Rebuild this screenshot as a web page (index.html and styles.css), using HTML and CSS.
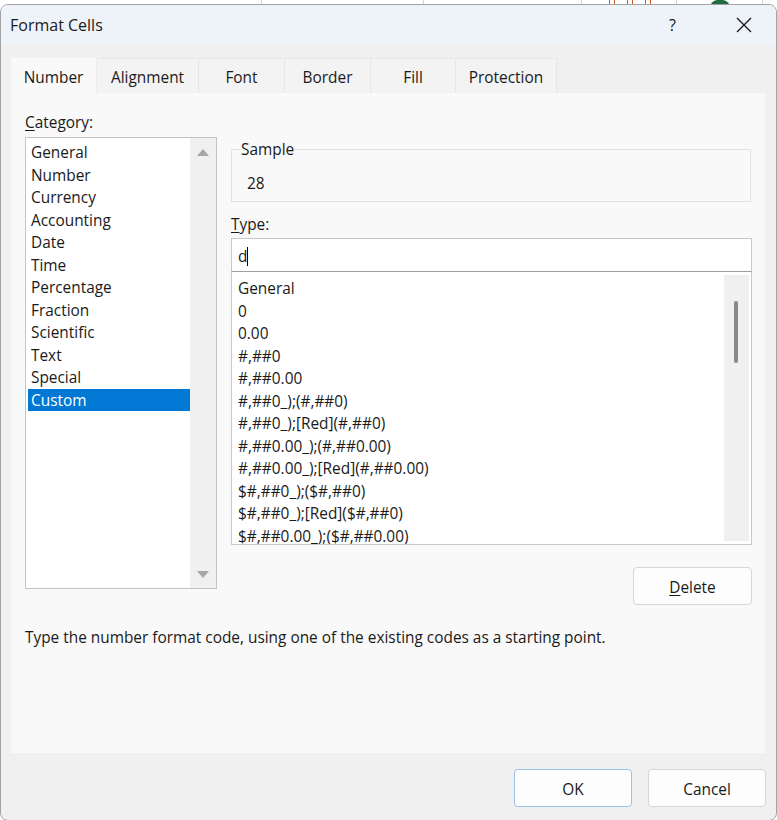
FILE: index.html
```html
<!DOCTYPE html>
<html lang="en">
<head>
<meta charset="utf-8">
<title>Format Cells</title>
<link rel="stylesheet" href="styles.css">
</head>
<body>
<div class="screen">
  <div class="backdrop">
    <div class="cell c1"></div>
    <div class="cell c2"></div>
    <div class="cell c3"></div>
    <div class="cell c4"><span class="mark"></span><span class="mark"></span><span class="mark"></span></div>
    <div class="cell c5"><span class="hill"></span></div>
    <div class="cell c6"></div>
  </div>

  <div class="dialog">
    <div class="titlebar">
      <span class="title">Format Cells</span>
      <span class="help">?</span>
      <span class="close">
        <svg width="16" height="16" viewBox="0 0 16 16"><path d="M1 1 L15 15 M15 1 L1 15" stroke="#1b1b1b" stroke-width="1.4" fill="none"/></svg>
      </span>
    </div>

    <div class="body">
      <div class="tabs">
        <div class="tab active w86">Number</div>
        <div class="tab w102">Alignment</div>
        <div class="tab w86">Font</div>
        <div class="tab w86">Border</div>
        <div class="tab w85">Fill</div>
        <div class="tab w101">Protection</div>
      </div>

      <div class="panel">
        <div class="columns">
          <div class="leftcol">
            <div class="label"><u>C</u>ategory:</div>
            <div class="catlist">
              <div class="items">
                <div class="item">General</div>
                <div class="item">Number</div>
                <div class="item">Currency</div>
                <div class="item">Accounting</div>
                <div class="item">Date</div>
                <div class="item">Time</div>
                <div class="item">Percentage</div>
                <div class="item">Fraction</div>
                <div class="item">Scientific</div>
                <div class="item">Text</div>
                <div class="item">Special</div>
                <div class="item selected">Custom</div>
              </div>
              <div class="cat-scroll">
                <span class="arrow up"></span>
                <span class="arrow down"></span>
              </div>
            </div>
          </div>

          <div class="rightcol">
            <fieldset class="sample">
              <legend>Sample</legend>
              <div class="sample-value">28</div>
            </fieldset>
            <div class="label type-label"><u>T</u>ype:</div>
            <div class="type-input">d<span class="caret"></span></div>
            <div class="fmtlist">
              <div class="items fmt-items">
                <div class="item">General</div>
                <div class="item">0</div>
                <div class="item">0.00</div>
                <div class="item">#,##0</div>
                <div class="item">#,##0.00</div>
                <div class="item">#,##0_);(#,##0)</div>
                <div class="item">#,##0_);[Red](#,##0)</div>
                <div class="item">#,##0.00_);(#,##0.00)</div>
                <div class="item">#,##0.00_);[Red](#,##0.00)</div>
                <div class="item">$#,##0_);($#,##0)</div>
                <div class="item">$#,##0_);[Red]($#,##0)</div>
                <div class="item">$#,##0.00_);($#,##0.00)</div>
              </div>
              <div class="fmt-scroll"><span class="thumb"></span></div>
            </div>
            <div class="delete-row">
              <div class="btn delete"><u>D</u>elete</div>
            </div>
          </div>
        </div>
        <div class="hint">Type the number format code, using one of the existing codes as a starting point.</div>
      </div>
    </div>

    <div class="footer">
      <div class="btn ok">OK</div>
      <div class="btn cancel">Cancel</div>
    </div>
  </div>
</div>
</body>
</html>
```

FILE: styles.css
```css
* { box-sizing: border-box; }

html, body {
  margin: 0;
  padding: 0;
  background: #ffffff;
  overflow: hidden;
}

body {
  font-family: "Open Sans", "Noto Sans", "DejaVu Sans", sans-serif;
  font-size: 15.4px;
  color: #1a1a1a;
}

.screen {
  display: grid;
  width: 777px;
  height: 820px;
}

.backdrop,
.dialog {
  grid-area: 1 / 1;
}

/* Excel sheet visible behind the dialog */
.backdrop {
  display: flex;
  height: 14px;
  background: #ffffff;
}
.cell {
  height: 100%;
  border-right: 1px solid #d4d4d4;
  display: flex;
  align-items: flex-start;
}
.c1 { width: 262px; }
.c2 { width: 162px; }
.c3 { width: 158px; }
.c4 { width: 95px; padding-left: 27px; gap: 12px; }
.c5 { width: 86px; padding-left: 31px; }
.c6 { flex: 1; border-right: 0; }
.mark {
  width: 6px;
  height: 14px;
  border: 1px solid #d2591c;
  border-top: 0;
}
.hill {
  width: 24px;
  height: 16px;
  margin-top: 0;
  background: #1e6b40;
  border-radius: 40% 40% 0 0 / 90% 90% 0 0;
}

/* Dialog */
.dialog {
  margin-top: 4px;
  height: 817px;
  width: 777px;
  border: 1px solid #a3a3a3;
  border-radius: 8px;
  overflow: hidden;
  background: #f0f0f0;
  display: flex;
  flex-direction: column;
  position: relative;
  z-index: 1;
}

.titlebar {
  height: 40px;
  background: #eef3f9;
  display: flex;
  align-items: center;
  padding-left: 9px;
}
.title {
  font-size: 16px;
  flex: 1;
  color: #1a1a1a;
}
.help {
  font-size: 16px;
  width: 10px;
  margin-right: 57px;
  color: #1a1a1a;
}
.close {
  width: 16px;
  height: 16px;
  margin-right: 24px;
  display: flex;
}

.body {
  padding: 13px 10px 0 10px;
}

.tabs {
  display: flex;
  height: 35px;
}
.tab {
  display: flex;
  align-items: center;
  justify-content: center;
  background: #f3f3f3;
  border-top: 1px solid #e8e8e8;
  border-right: 1px solid #e6e6e6;
  color: #1a1a1a;
  padding-top: 3px;
}
.tab.active {
  background: #f9f9f9;
  border-top-color: #f9f9f9;
  border-right-color: #ececec;
}
.w86 { width: 86px; }
.w102 { width: 102px; }
.w85 { width: 85px; }
.w101 { width: 101px; }

.panel {
  width: 754px;
  height: 660px;
  background: #f9f9f9;
  padding: 18px 13px 0 14px;
}

.columns {
  display: flex;
  gap: 14px;
  align-items: flex-start;
}

.label {
  line-height: 22px;
  height: 22px;
  padding-top: 1px;
}
u { text-decoration-thickness: 1px; text-underline-offset: 2px; }

.leftcol {
  width: 192px;
  display: flex;
  flex-direction: column;
}

.catlist {
  margin-top: 4px;
  height: 452px;
  border: 1px solid #c4c4c4;
  background: #ffffff;
  display: flex;
}
.items {
  flex: 1;
  overflow: hidden;
}
.catlist .items {
  padding: 3px 0 0 2px;
}
.item {
  height: 22.5px;
  line-height: 22.5px;
  padding-left: 3px;
  white-space: nowrap;
}
.item span, .item { }
.catlist .item, .fmt-items .item {
  line-height: 24.5px;
}
.item.selected {
  background: #0078d4;
  color: #ffffff;
  line-height: 23.5px;
}

.cat-scroll {
  width: 26px;
  background: #f0f0f0;
  display: flex;
  flex-direction: column;
  justify-content: space-between;
  align-items: center;
  padding: 11px 0 10px 0;
}
.arrow {
  width: 0;
  height: 0;
  border-left: 6px solid transparent;
  border-right: 6px solid transparent;
}
.arrow.up { border-bottom: 7px solid #a6a6a6; }
.arrow.down { border-top: 7px solid #a6a6a6; }

.rightcol {
  width: 521px;
  display: flex;
  flex-direction: column;
}

.sample {
  margin: 26px 0 0 0;
  padding: 0 0 0 9px;
  border: 1px solid #e2e2e2;
  min-inline-size: 0;
  width: 520px;
}
.sample legend {
  padding: 2px 0 0 0;
  line-height: 22px;
}
.sample-value {
  line-height: 22px;
  padding: 12px 0 6px 6px;
}

.type-label {
  margin-top: 11px;
}

.type-input {
  margin-top: 3px;
  height: 34px;
  border: 1px solid #c8c8c8;
  border-bottom-color: #9e9e9e;
  background: #ffffff;
  display: flex;
  align-items: center;
  padding-left: 6px;
  padding-top: 2px;
}
.caret {
  display: inline-block;
  width: 1px;
  height: 19px;
  background: #000000;
  margin-left: 0;
}

.fmtlist {
  height: 273px;
  border: 1px solid #c8c8c8;
  border-top: 0;
  background: #ffffff;
  display: flex;
}
.fmt-items {
  padding: 5px 0 0 3px;
}
.fmt-scroll {
  width: 25px;
  margin: 3px 2px 3px 0;
  background: #f0f0f0;
  padding: 26px 0 0 10px;
}
.thumb {
  display: block;
  width: 4px;
  height: 62px;
  border-radius: 2px;
  background: #8a8a8a;
}

.delete-row {
  display: flex;
  justify-content: flex-end;
  margin-top: 22px;
}

.btn {
  display: flex;
  align-items: center;
  justify-content: center;
  background: #fdfdfd;
  border: 1px solid #d6d6d6;
  border-radius: 4px;
  color: #1a1a1a;
  padding-top: 3px;
}
.delete {
  width: 119px;
  height: 38px;
}

.hint {
  margin-top: 22px;
  line-height: 22px;
}

.footer {
  display: flex;
  justify-content: flex-end;
  gap: 16px;
  padding: 16px 10px 0 0;
}
.ok, .cancel {
  width: 118px;
  height: 38px;
}
.ok {
  border-color: #9cc0e6;
}
```
